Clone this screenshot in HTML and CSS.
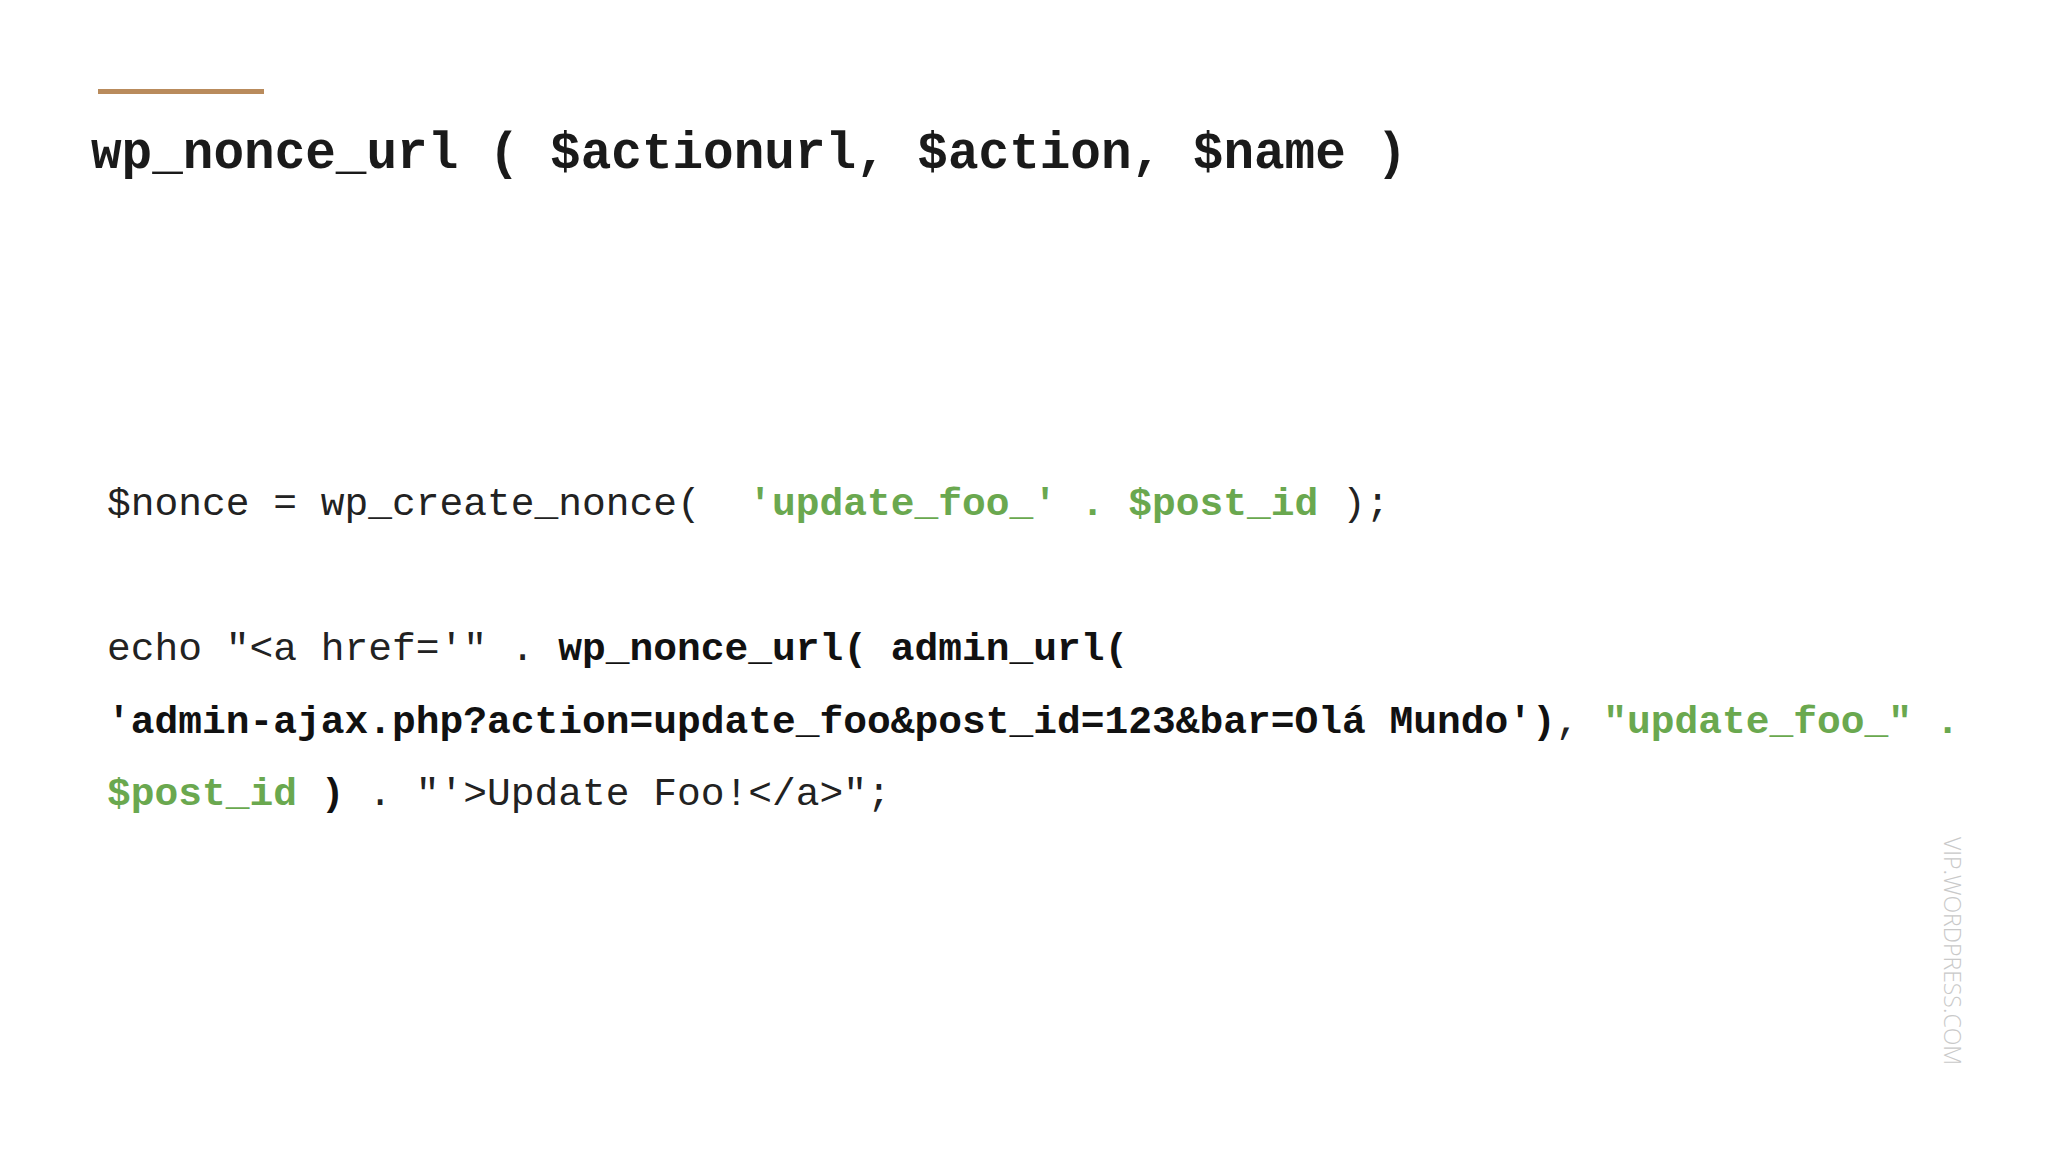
FILE: index.html
```html
<!DOCTYPE html>
<html>
<head>
<meta charset="utf-8">
<link rel="stylesheet" href="styles.css">
</head>
<body>
<div class="slide">
  <div class="accent"></div>
  <h1 class="title">wp_nonce_url ( $actionurl, $action, $name )</h1>
  <div class="code">
    <div class="line">$nonce = wp_create_nonce(  <span class="str">'update_foo_' . $post_id</span> );</div>
    <div class="line"> </div>
    <div class="line">echo "&lt;a href='" . <b>wp_nonce_url( admin_url(</b></div>
    <div class="line"><b>'admin-ajax.php?action=update_foo&amp;post_id=123&amp;bar=Olá Mundo')</b>, <span class="str">"update_foo_" .</span></div>
    <div class="line"><span class="str">$post_id</span> <b>)</b> . "'&gt;Update Foo!&lt;/a&gt;";</div>
  </div>
  <div class="watermark">VIP.WORDPRESS.COM</div>
</div>
</body>
</html>
```
FILE: styles.css
```css
html, body {
  margin: 0;
  padding: 0;
  background: #ffffff;
}
.slide {
  position: relative;
  width: 2048px;
  height: 1152px;
  overflow: hidden;
  background: #ffffff;
}
.accent {
  margin-left: 98px;
  margin-top: 89px;
  width: 166px;
  height: 5px;
  background: #b98b5c;
}
.title {
  margin: 31px 0 0 91px;
  font-family: "Liberation Mono", "Courier New", monospace;
  font-weight: bold;
  font-size: 51px;
  line-height: 60px;
  color: #1a1a1a;
  white-space: pre;
}
.code {
  margin: 284px 0 0 107px;
  font-family: "Liberation Mono", "Courier New", monospace;
  font-size: 39.6px;
  line-height: 72.5px;
  color: #222222;
}
.line {
  white-space: pre;
  height: 72.5px;
}
.code b {
  font-weight: bold;
  color: #111111;
}
.str {
  font-weight: bold;
  color: #6aa84f;
}
.watermark {
  position: absolute;
  left: 1937px;
  top: 837px;
  writing-mode: vertical-rl;
  font-family: "Open Sans", "Liberation Sans", sans-serif;
  font-weight: 300;
  font-size: 23px;
  color: #c9c9c9;
}
```
